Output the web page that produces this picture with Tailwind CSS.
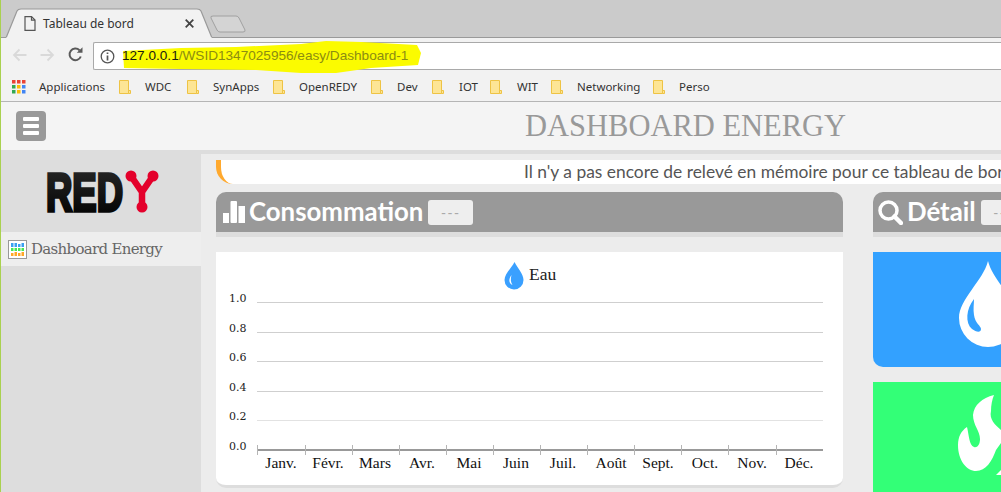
<!DOCTYPE html>
<html lang="fr">

<head>
    <meta charset="UTF-8">
    <meta name="viewport" content="width=device-width, initial-scale=1.0">
    <title>Tableau de bord</title>
    <script src="https://cdn.jsdelivr.net/npm/@tailwindcss/browser@4"></script>
</head>

<body class="bg-[#ececec] overflow-hidden">
    <div class="relative w-[1001px] h-[492px] overflow-hidden border-l border-[#a9d14f] font-['Noto_Sans',sans-serif]">

        <!-- onglets -->
        <div class="relative h-[38px] bg-[#cbcbcb] border-b border-[#9a9a9a]">
            <svg class="absolute left-[-1px] top-[8px]" width="250" height="31" viewBox="0 0 250 31">
                <path d="M6 30 L17 3 Q18 1 21 1 H197 Q200 1 201 3 L212 30" fill="#f2f2f2" stroke="#9a9a9a" stroke-width="1.2" />
                <path d="M6.5 30 H211.5" stroke="#f2f2f2" stroke-width="2" />
                <path d="M211 10 Q210 8 213 8 H236 Q238 8 239 10 L245 22 Q245.500 24 243 24 H220 Q218 24 217 22 Z" fill="#d4d4d4" stroke="#a0a0a0" />
            </svg>
            <svg class="absolute left-[23px] top-[16px]" width="12" height="15" viewBox="0 0 12 15" fill="none" stroke="#555" stroke-width="1.2">
                <path d="M1 .6H7.500L11 4.100V14.400H1Z" />
                <path d="M7.500 .6V4.100H11" />
            </svg>
            <span class="absolute left-[42px] top-[15px] text-[12px] leading-[18px] text-[#333]">Tableau de bord</span>
            <svg class="absolute left-[184px] top-[19px]" width="9" height="9" viewBox="0 0 9 9" stroke="#444" stroke-width="1.800">
                <path d="M.7 .7 8.300 8.300M8.300 .7 .7 8.300" />
            </svg>
        </div>

        <!-- barre d'adresse -->
        <div class="relative flex h-[32px] bg-[#f2f2f2] pt-[4px]">
            <div class="flex items-center gap-[13px] w-[92px] shrink-0 pl-[11px] pb-[3px]">
                <svg width="15" height="14" viewBox="0 0 15 14" fill="none" stroke="#d9d9d9" stroke-width="1.800">
                    <path d="M14.500 7H2M7.500 1.500 2 7l5.500 5.500" />
                </svg>
                <svg width="15" height="14" viewBox="0 0 15 14" fill="none" stroke="#d9d9d9" stroke-width="1.800">
                    <path d="M.5 7H13M7.500 1.500 13 7l-5.500 5.500" />
                </svg>
                <svg width="15" height="15" viewBox="0 0 15 15" fill="none">
                    <path d="M12.800 9.500A5.800 5.800 0 1 1 11.500 3.300" stroke="#5a5a5a" stroke-width="2" />
                    <path d="M8.800 5.800H14.500V.2Z" fill="#5a5a5a" />
                </svg>
            </div>
            <div class="relative flex items-center flex-1 h-[28px] bg-white border border-r-0 border-[#a9a9a9] rounded-l-[2px]">
                <svg class="ml-[6px] shrink-0" width="15" height="15" viewBox="0 0 15 15" fill="none">
                    <circle cx="7.500" cy="7.500" r="6.300" stroke="#555" stroke-width="1.300" />
                    <path d="M7.500 6.500V11.500M7.500 3.500V5" stroke="#555" stroke-width="1.700" />
                </svg>
                <svg class="absolute left-[27px] top-[-2px]" width="302" height="34" viewBox="0 0 302 34">
                    <path d="M2 10 L60 7 L115 6 L180 3 L205 0 L240 1 L296 4 L300 12 L297 24 L250 27 L215 32 L180 32 L135 29 L60 28 L3 27 Z" fill="#fbfb00" />
                </svg>
                <span class="relative ml-[7px] text-[13.6px] leading-[18px] font-['Liberation_Sans',sans-serif] whitespace-nowrap text-[#8c8c12]"><span class="text-[#1c1c10]">127.0.0.1</span>/WSID1347025956/easy/Dashboard-1</span>
            </div>
        </div>

        <!-- favoris -->
        <div class="flex items-center h-[32px] bg-[#f2f2f2] border-b border-[#b5b5b5] text-[11.5px] text-[#333] pl-[11px] pt-[3px] whitespace-nowrap">
            <svg class="mr-[13px]" width="14" height="14" viewBox="0 0 14 14">
                <rect x="0" y="0" width="3.500" height="3.500" fill="#ea4335" />
                <rect x="5" y="0" width="3.500" height="3.500" fill="#ea4335" />
                <rect x="10" y="0" width="3.500" height="3.500" fill="#ea4335" />
                <rect x="0" y="5" width="3.500" height="3.500" fill="#34a853" />
                <rect x="5" y="5" width="3.500" height="3.500" fill="#fbbc05" />
                <rect x="10" y="5" width="3.500" height="3.500" fill="#4285f4" />
                <rect x="0" y="10" width="3.500" height="3.500" fill="#34a853" />
                <rect x="5" y="10" width="3.500" height="3.500" fill="#fbbc05" />
                <rect x="10" y="10" width="3.500" height="3.500" fill="#4285f4" />
            </svg>
            <span class="w-[80px]">Applications</span>
            <svg class="mr-[14px]" width="12" height="14" viewBox="0 0 12 14"><path d="M.5 .5H9.500V13.500H.5Z" fill="#fde595" stroke="#eec344" /><path d="M9.500 10.500H11.500V13.500H9.500Z" fill="#fde595" stroke="#eec344" /></svg>
            <span class="w-[42px]">WDC</span>
            <svg class="mr-[14px]" width="12" height="14" viewBox="0 0 12 14"><path d="M.5 .5H9.500V13.500H.5Z" fill="#fde595" stroke="#eec344" /><path d="M9.500 10.500H11.500V13.500H9.500Z" fill="#fde595" stroke="#eec344" /></svg>
            <span class="w-[60px]">SynApps</span>
            <svg class="mr-[14px]" width="12" height="14" viewBox="0 0 12 14"><path d="M.5 .5H9.500V13.500H.5Z" fill="#fde595" stroke="#eec344" /><path d="M9.500 10.500H11.500V13.500H9.500Z" fill="#fde595" stroke="#eec344" /></svg>
            <span class="w-[72px]">OpenREDY</span>
            <svg class="mr-[14px]" width="12" height="14" viewBox="0 0 12 14"><path d="M.5 .5H9.500V13.500H.5Z" fill="#fde595" stroke="#eec344" /><path d="M9.500 10.500H11.500V13.500H9.500Z" fill="#fde595" stroke="#eec344" /></svg>
            <span class="w-[35px]">Dev</span>
            <svg class="mr-[15px]" width="12" height="14" viewBox="0 0 12 14"><path d="M.5 .5H9.500V13.500H.5Z" fill="#fde595" stroke="#eec344" /><path d="M9.500 10.500H11.500V13.500H9.500Z" fill="#fde595" stroke="#eec344" /></svg>
            <span class="w-[31px]">IOT</span>
            <svg class="mr-[15px]" width="12" height="14" viewBox="0 0 12 14"><path d="M.5 .5H9.500V13.500H.5Z" fill="#fde595" stroke="#eec344" /><path d="M9.500 10.500H11.500V13.500H9.500Z" fill="#fde595" stroke="#eec344" /></svg>
            <span class="w-[34px]">WIT</span>
            <svg class="mr-[14px]" width="12" height="14" viewBox="0 0 12 14"><path d="M.5 .5H9.500V13.500H.5Z" fill="#fde595" stroke="#eec344" /><path d="M9.500 10.500H11.500V13.500H9.500Z" fill="#fde595" stroke="#eec344" /></svg>
            <span class="w-[76px]">Networking</span>
            <svg class="mr-[14px]" width="12" height="14" viewBox="0 0 12 14"><path d="M.5 .5H9.500V13.500H.5Z" fill="#fde595" stroke="#eec344" /><path d="M9.500 10.500H11.500V13.500H9.500Z" fill="#fde595" stroke="#eec344" /></svg>
            <span>Perso</span>
        </div>

        <!-- entete appli -->
        <div class="flex items-center h-[48px] bg-[#f4f4f4] pl-[15px]">
            <button class="flex flex-col justify-center gap-[3px] w-[30px] h-[30px] bg-[#999] rounded-[4px] px-[7px]">
                <span class="block h-[4px] bg-white rounded-[1px]"></span>
                <span class="block h-[4px] bg-white rounded-[1px]"></span>
                <span class="block h-[4px] bg-white rounded-[1px]"></span>
            </button>
            <h1 class="ml-[479px] text-[30.5px] leading-[34px] text-[#999] font-['Liberation_Serif',serif] whitespace-nowrap">DASHBOARD ENERGY</h1>
        </div>

        <div class="flex h-[343px]">
            <!-- menu -->
            <aside class="w-[200px] shrink-0 bg-[#dddddd]">
                <div class="h-[82px] pt-[17px] pl-[40px]">
                    <svg width="160" height="50" viewBox="0 0 160 50">
                        <defs>
                            <linearGradient id="logoGrad" x1="0" y1="0" x2="0" y2="1">
                                <stop offset="0" stop-color="#2a2a2a" />
                                <stop offset="1" stop-color="#000" />
                            </linearGradient>
                        </defs>
                        <text x="5" y="43.500" textLength="77" lengthAdjust="spacingAndGlyphs" font-family="Liberation Sans" font-weight="700" font-size="54" fill="url(#logoGrad)" stroke="url(#logoGrad)" stroke-width="3.500">RED</text>
                        <path d="M90 9 L101 25 L112 9M101 25V40" fill="none" stroke="#e4002b" stroke-width="6.500" />
                        <circle cx="90" cy="9" r="5.500" fill="#e4002b" />
                        <circle cx="112" cy="9" r="5.500" fill="#e4002b" />
                        <circle cx="101" cy="40" r="5.500" fill="#e4002b" />
                    </svg>
                </div>
                <div class="flex items-center gap-[4px] h-[34px] bg-[#eeeeee] pl-[7px] font-['DejaVu_Serif',serif] text-[#666] text-[15px]">
                    <svg width="19" height="19" viewBox="0 0 19 19">
                        <rect x=".5" y=".5" width="18" height="18" fill="#fff" stroke="#999" />
                        <path d="M3 3h2.500v4H3zM6.500 3H9v4H6.500zM10 4h2.500v3H10zM13.500 3H16v4h-2.500z" fill="#3aa0f0" />
                        <path d="M3 8h2.500v3H3zM6.500 8H9v3H6.500zM10 8h2.500v3H10zM13.500 8H16v3h-2.500z" fill="#44e855" />
                        <path d="M3 13h2.500v3H3zM6.500 12h2.500v4H6.500zM10 13h2.500v3H10zM13.500 12H16v4h-2.500z" fill="#ffa726" />
                    </svg>
                    <span class="tracking-[-0.7px] whitespace-nowrap">Dashboard Energy</span>
                </div>
            </aside>

            <!-- contenu -->
            <main class="flex-1 min-w-0 bg-[#ececec] border-t-[4px] border-[#dddddd] pl-[15px] pt-[6px] overflow-hidden">
                <div class="flex items-center h-[24px] bg-white border-l-[5px] border-[#ffa92e] rounded-bl-[17px] pl-[303px] text-[17.4px] text-[#555] font-['Lato',sans-serif] whitespace-nowrap overflow-hidden">Il n'y a pas encore de relevé en mémoire pour ce tableau de bord</div>

                <div class="flex gap-[30px] mt-[8px]">
                    <section class="w-[627px] shrink-0">
                        <div class="flex items-center h-[45px] bg-[#999] border-b-[5px] border-[#dddddd] rounded-t-[10px] pl-[7px] text-white">
                            <svg width="22" height="22" viewBox="0 0 22 22" fill="#fff">
                                <rect x="0" y="12" width="6" height="10" />
                                <rect x="7.500" y="0" width="6.500" height="22" rx="1" />
                                <rect x="15.500" y="5" width="6.500" height="17" />
                            </svg>
                            <span class="ml-[4px] text-[25.8px] font-bold font-['Lato',sans-serif] leading-none">Consommation</span>
                            <span class="flex items-center justify-center w-[45px] h-[25px] ml-[5px] bg-[#eee] rounded-[3px] text-[#aaa] text-[14px] tracking-[2px]">---</span>
                        </div>
                        <div class="mt-[15px] h-[236px] bg-white rounded-b-[10px] border-b-[3px] border-[#dddddd]">
                            <svg width="627" height="233" viewBox="0 0 627 233" font-family="Liberation Serif" fill="#222">
                                <path transform="translate(288.500 10)" d="M10 0C13 6 19 12 19 18A9.500 9.500 0 0 1 0 18C0 12 7 6 10 0Z" fill="#3aa0ff" />
                                <path transform="translate(288.500 10)" d="M7 13C4 17 4 21 8 23C6 20 6 17 7 13Z" fill="#fff" />
                                <text x="313" y="28" font-size="17.500">Eau</text>
                                <g stroke="#cfcfcf" stroke-width="1">
                                    <path d="M41 50.500H607" />
                                    <path d="M41 80.500H607" />
                                    <path d="M41 109.500H607" />
                                    <path d="M41 139.500H607" />
                                    <path d="M41 168.500H607" stroke="#e2e2e2" />
                                </g>
                                <g font-family="DejaVu Serif" font-size="11" fill="#222">
                                    <text x="13" y="50">1.0</text>
                                    <text x="13" y="80">0.8</text>
                                    <text x="13" y="109">0.6</text>
                                    <text x="13" y="139">0.4</text>
                                    <text x="13" y="168">0.2</text>
                                    <text x="13" y="198">0.0</text>
                                </g>
                                <path d="M41 198H607" stroke="#999" stroke-width="2" />
                                <path d="M41.500 193v10M89.500 193v10M136.500 193v10M183.500 193v10M230.500 193v10M277.500 193v10M324.500 193v10M371.500 193v10M418.500 193v10M465.500 193v10M512.500 193v10M560.500 193v10" stroke="#b5b5b5" />
                                <g font-size="15.500" text-anchor="middle" fill="#111">
                                    <text x="65" y="216">Janv.</text>
                                    <text x="112" y="216">Févr.</text>
                                    <text x="159" y="216">Mars</text>
                                    <text x="206" y="216">Avr.</text>
                                    <text x="253" y="216">Mai</text>
                                    <text x="300" y="216">Juin</text>
                                    <text x="347" y="216">Juil.</text>
                                    <text x="395" y="216">Août</text>
                                    <text x="442" y="216">Sept.</text>
                                    <text x="489" y="216">Oct.</text>
                                    <text x="536" y="216">Nov.</text>
                                    <text x="583" y="216">Déc.</text>
                                </g>
                            </svg>
                        </div>
                    </section>

                    <section class="w-[300px] shrink-0">
                        <div class="flex items-center h-[45px] bg-[#999] border-b-[5px] border-[#dddddd] rounded-t-[10px] pl-[5px] text-white">
                            <svg width="25" height="25" viewBox="0 0 25 25" fill="none" stroke="#fff">
                                <circle cx="10.500" cy="10.500" r="8.500" stroke-width="3.500" />
                                <path d="M16.500 16.500 23 23" stroke-width="4.500" stroke-linecap="round" />
                            </svg>
                            <span class="ml-[4px] text-[25.8px] font-bold font-['Lato',sans-serif] leading-none">Détail</span>
                            <span class="flex items-center justify-center w-[45px] h-[25px] ml-[5px] bg-[#eee] rounded-[3px] text-[#aaa] text-[14px] tracking-[2px]">---</span>
                        </div>
                        <div class="mt-[15px] h-[115px] bg-[#33a1ff] rounded-b-[10px] pl-[85px] pt-[9px]">
                            <svg width="60" height="86" viewBox="0 0 60 86">
                                <path d="M30 0C35 20 59 38 59 57A29 29 0 0 1 1 57C1 38 25 20 30 0Z" fill="#fff" />
                                <path d="M16 38C8 48 7 62 14 68C18 71 23 72 23 68C23 65 17 62 16 54C15 48 16 43 16 38Z" fill="#33a1ff" />
                            </svg>
                        </div>
                        <div class="mt-[15px] h-[120px] bg-[#33ff77] pl-[83px] pt-[13px]">
                            <svg width="60" height="83" viewBox="0 0 60 83">
                                <path d="M38 0C26 3 18 10 17 20C17 30 24 36 24 44C24 50 21 53 18 52C13 50 13 40 11 32C5 36 2 42 2 50C2 66 11 76 20 76C30 76 36 66 40 55L45 48V35C39 30 33 24 35 16C35 10 36 5 38 0Z" fill="#fff" />
                                <path d="M40 80 45 75V80Z" fill="#fff" />
                            </svg>
                        </div>
                    </section>
                </div>
            </main>
        </div>
    </div>
</body>

</html>
